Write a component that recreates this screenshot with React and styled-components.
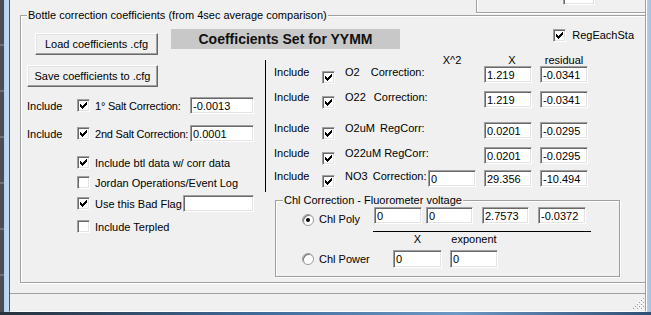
import React from 'react';
import styled, { createGlobalStyle, css } from 'styled-components';

/* Globals */
const Global = createGlobalStyle`
  html, body { margin: 0; padding: 0; }
  body {
    width: 651px;
    height: 315px;
    overflow: hidden;
    background: #2f3338;
    font-family: "Liberation Sans", Arial, sans-serif;
    font-size: 11px;
    color: #000;
  }
`

const sunken = css`
  border: 1px solid;
  border-color: #a0a0a0 #ffffff #ffffff #a0a0a0;
  box-shadow: inset 1px 1px 0 #696969, inset -1px -1px 0 #e3e3e3;
`

/* Window frame */
const Window = styled.div`
  width: 651px;
  height: 315px;
  display: flex;
  flex-direction: column;
`
const Frame = styled.div`
  display: flex;
  height: 312px;
`
const LeftEdge = styled.div`
  width: 9px;
  flex: none;
  background:
    repeating-linear-gradient(#4a4e54 0 44px, #6c7076 44px 46px) left / 4px 100% no-repeat,
    linear-gradient(to right, #a6c8ea, #c3dbf2);
`
const RightEdge = styled.div`
  width: 5px;
  flex: none;
  background: linear-gradient(to right, #ffffff 0 1px, #b4cfec 1px, #9fc0e4);
`
const BottomEdge = styled.div`
  height: 3px;
  background: linear-gradient(to right, #27313c, #3f6b9a 40%, #6d98c6 70%, #2f4f74);
`
const Client = styled.div`
  flex: 1;
  display: flex;
  flex-direction: column;
  background: #f0f0f0;
  border-left: 1px solid #46505a;
  border-right: 1px solid #a0a0a0;
  border-bottom: 1px solid #ffffff;
  overflow: hidden;
`

/* Top strip (the box above, cut off) */
const TopStrip = styled.div`
  height: 15px;
  flex: none;
  display: flex;
  padding-left: 466px;
`
const TopBox = styled.div`
  box-sizing: border-box;
  flex: 1;
  height: 13px;
  padding-left: 86px;
  border-left: 1px solid #a0a0a0;
  border-bottom: 1px solid #a0a0a0;
  box-shadow: inset 1px 0 0 #fff, 0 1px 0 #fff;
  display: flex;
  align-items: flex-start;
`

/* Group boxes */
const Group = styled.div`
  box-sizing: border-box;
  flex: none;
  height: 268px;
  margin-left: 10px;
  border: 1px solid #a0a0a0;
  border-right: none;
  box-shadow: inset 1px 1px 0 #fff, 0 1px 0 #fff;
  display: flex;
  flex-direction: column;
`
const ChlGroup = styled.div`
  box-sizing: border-box;
  width: 345px;
  height: 77px;
  margin: 8px 0 0 10px;
  border: 1px solid #a0a0a0;
  box-shadow: inset 1px 1px 0 #fff, 1px 1px 0 #fff;
  display: flex;
  flex-direction: column;
`
const Legend = styled.span`
  align-self: flex-start;
  margin: -7px 0 0 ${p => p.$ml}px;
  padding: 0 1px;
  background: #f0f0f0;
  line-height: 13px;
  white-space: nowrap;
`

/* Controls */
const Button = styled.button`
  box-sizing: border-box;
  width: ${p => p.$w}px;
  height: 22px;
  margin: ${p => p.$m};
  padding: 0;
  font: 11px "Liberation Sans", Arial, sans-serif;
  color: #000;
  background: #f0f0f0;
  border: 1px solid;
  border-color: #ffffff #696969 #696969 #ffffff;
  box-shadow: inset -1px -1px 0 #a0a0a0, inset 1px 1px 0 #e3e3e3;
`
const Field = styled.input.attrs({ readOnly: true, type: 'text' })`
  box-sizing: border-box;
  width: ${p => p.$w || 48}px;
  height: ${p => p.$h || 17}px;
  margin: ${p => p.$mt || 0}px 0 0 ${p => p.$ml || 0}px;
  padding: 0 0 0 2px;
  font: 11px "Liberation Sans", Arial, sans-serif;
  color: #000;
  background: #fff;
  outline: none;
  ${sunken}
`
const Box = styled.span`
  box-sizing: border-box;
  width: 13px;
  height: 13px;
  flex: none;
  display: inline-flex;
  align-items: center;
  justify-content: center;
  background: #fff;
  align-self: ${p => p.$self || 'auto'};
  margin-bottom: ${p => p.$mb || 0}px;
  ${sunken}
`
const RadioDot = styled.span`
  box-sizing: border-box;
  width: 12px;
  height: 12px;
  flex: none;
  margin-top: ${p => p.$mt || 0}px;
  border-radius: 50%;
  background: #fff;
  border: 1px solid #9a9a9a;
  box-shadow: inset 1px 1px 0 #7a7a7a;
  display: inline-flex;
  align-items: center;
  justify-content: center;
  &::after {
    content: "";
    width: 4px;
    height: 4px;
    border-radius: 50%;
    background: ${p => (p.$on ? '#000' : 'transparent')};
  }
`

const TICK = [[1, 3], [2, 4], [3, 5], [4, 4], [5, 3], [6, 2], [7, 1]]

function Check({ on = true, self, mb }) {
  return (
    <Box $self={self} $mb={mb}>
      {on && (
        <svg width="9" height="9" viewBox="0 0 9 9" shapeRendering="crispEdges">
          {TICK.map(([x, y]) => (
            <rect key={x} x={x} y={y} width="1" height="3" fill="#000" />
          ))}
        </svg>
      )}
    </Box>
  )
}

/* Top row */
const TopRow = styled.div`
  display: flex;
  align-items: flex-start;
  height: 26px;
  margin-top: 7px;
`
const TitleLabel = styled.div`
  width: 229px;
  height: 20px;
  margin-left: 13px;
  background: #c8c8c8;
  font-size: 14px;
  font-weight: bold;
  line-height: 20px;
  text-align: center;
  color: #111;
`
const RegEach = styled.div`
  margin: 0 11px 0 auto;
  display: flex;
  align-items: center;
  gap: 6px;
  height: 13px;
  line-height: 13px;
`

/* Body */
const Body = styled.div`
  display: flex;
  align-items: flex-start;
`
const LeftCol = styled.div`
  box-sizing: border-box;
  width: 244px;
  flex: none;
  padding-left: 6px;
  display: flex;
  flex-direction: column;
  align-items: flex-start;
`
const SaltRow = styled.div`
  display: grid;
  grid-template-columns: 50px 18px 95px 64px;
  align-items: center;
  height: 17px;
  margin-top: ${p => p.$mt}px;
  white-space: nowrap;
`
const SaltText = styled.span`
  letter-spacing: -0.2px;
`
const OptRow = styled.div`
  display: flex;
  align-items: center;
  height: 17px;
  padding-left: 50px;
  margin-top: ${p => p.$mt}px;
  white-space: nowrap;
`
const OptText = styled.span`
  margin-left: 5px;
  width: ${p => (p.$w ? `${p.$w}px` : 'auto')};
`

const RightCol = styled.div`
  flex: 1;
  display: flex;
  flex-direction: column;
`
const CoeffPanel = styled.div`
  padding: 0 0 5px 9px;
  background: linear-gradient(#000, #000) left 5px / 1px calc(100% - 5px) no-repeat;
`
const CoeffRow = styled.div`
  display: grid;
  grid-template-columns: 48px 23px 83px 56px 56px 48px;
  height: ${p => p.$h || 17}px;
  margin-top: ${p => p.$mt || 0}px;
  white-space: nowrap;
`
const Cell = styled.span`
  align-self: start;
  line-height: 13px;
`
const HeadCell = styled.span`
  grid-column: ${p => p.$col};
  width: 48px;
  box-sizing: border-box;
  padding-left: ${p => p.$pl || 0}px;
  text-align: center;
  line-height: 11px;
`
const Spaced = styled.span`
  word-spacing: ${p => p.$ws}px;
`

/* Chl group content */
const PolyRow = styled.div`
  display: flex;
  align-items: flex-start;
  height: 17px;
  padding-left: 26px;
`
const PowerRow = styled.div`
  display: flex;
  align-items: center;
  height: 18px;
  margin-top: 4px;
  padding-left: 26px;
`
const RadioText = styled.span`
  margin: ${p => p.$mt || 0}px 0 0 5px;
  width: ${p => p.$w}px;
  line-height: 13px;
  white-space: nowrap;
`
const Rule = styled.div`
  width: 218px;
  height: 1px;
  margin: 7px 0 0 97px;
  background: #000;
`
const ChlHead = styled.div`
  display: flex;
  gap: 8px;
  margin: 1px 0 0 117px;
  line-height: 13px;
`
const ChlHeadCell = styled.span`
  width: ${p => p.$w}px;
  text-align: center;
`

/* Status bar */
const StatusBar = styled.div`
  box-sizing: border-box;
  height: 18px;
  margin-top: 10px;
  border-top: 1px solid #a0a0a0;
  display: flex;
  justify-content: flex-end;
  align-items: flex-end;
  padding: 0 1px 1px 0;
`

function Grip() {
  return (
    <svg width="12" height="12" viewBox="0 0 12 12" shapeRendering="crispEdges">
      {[0, 4, 8].map(o =>
        Array.from({ length: 12 - o }).map((_, i) => (
          <rect key={`${o}-${i}`} x={11 - i} y={o + i} width="1" height="1" fill={i % 2 ? '#fff' : '#9c9c9c'} />
        ))
      )}
    </svg>
  )
}

const coeffRows = [
  { mt: 0, name: 'O2', ws: 8, kind: 'Correction:', x: '1.219', r: '-0.0341' },
  { mt: 8, name: 'O22', ws: 5, kind: 'Correction:', x: '1.219', r: '-0.0341' },
  { mt: 14, name: 'O2uM', ws: 2, kind: 'RegCorr:', x: '0.0201', r: '-0.0295' },
  { mt: 8, name: 'O22uM', ws: 0, kind: 'RegCorr:', x: '0.0201', r: '-0.0295' },
  { mt: 6, name: 'NO3', ws: 2, kind: 'Correction:', x2: '0', x: '29.356', r: '-10.494' },
]

export default function App() {
  return (
    <>
      <Global />
      <Window>
        <Frame>
          <LeftEdge />
          <Client>
            <TopStrip>
              <TopBox>
                <Field $w={32} $mt={-12} value="" />
              </TopBox>
            </TopStrip>

            <Group>
              <Legend $ml={6}>Bottle correction coefficients (from 4sec average comparison)</Legend>

              <TopRow>
                <Button $w={123} $m="4px 0 0 14px">Load coefficients .cfg</Button>
                <TitleLabel>Coefficients Set for YYMM</TitleLabel>
                <RegEach>
                  <Check />
                  <span>RegEachSta</span>
                </RegEach>
              </TopRow>

              <Body>
                <LeftCol>
                  <Button $w={131} $m="10px 0 0 0">Save coefficients to .cfg</Button>
                  <SaltRow $mt={10}>
                    <span>Include</span>
                    <Check />
                    <SaltText>1° Salt Correction:</SaltText>
                    <Field $w={64} value="-0.0013" />
                  </SaltRow>
                  <SaltRow $mt={11}>
                    <span>Include</span>
                    <Check />
                    <SaltText>2nd Salt Correction:</SaltText>
                    <Field $w={64} value="0.0001" />
                  </SaltRow>
                  <OptRow $mt={12}>
                    <Check />
                    <OptText>Include btl data w/ corr data</OptText>
                  </OptRow>
                  <OptRow $mt={3}>
                    <Check on={false} />
                    <OptText>Jordan Operations/Event Log</OptText>
                  </OptRow>
                  <OptRow $mt={4}>
                    <Check />
                    <OptText $w={88}>Use this Bad Flag</OptText>
                    <Field $w={71} value="" />
                  </OptRow>
                  <OptRow $mt={6}>
                    <Check on={false} />
                    <OptText>Include Terpled</OptText>
                  </OptRow>
                </LeftCol>

                <RightCol>
                  <CoeffPanel>
                    <CoeffRow $h={11}>
                      <HeadCell $col={4}>X^2</HeadCell>
                      <HeadCell $col={5} $pl={8}>X</HeadCell>
                      <HeadCell $col={6}>residual</HeadCell>
                    </CoeffRow>
                    {coeffRows.map(row => (
                      <CoeffRow key={row.name} $mt={row.mt}>
                        <Cell>Include</Cell>
                        <Check self="end" mb={-1} />
                        <Cell>
                          <Spaced $ws={row.ws}>{row.name} {row.kind}</Spaced>
                        </Cell>
                        {row.x2 !== undefined ? <Field value={row.x2} /> : <span />}
                        <Field value={row.x} />
                        <Field value={row.r} />
                      </CoeffRow>
                    ))}
                  </CoeffPanel>

                  <ChlGroup>
                    <Legend $ml={7}>Chl Correction - Fluorometer voltage</Legend>
                    <PolyRow>
                      <RadioDot $on $mt={7} />
                      <RadioText $mt={6} $w={55}>Chl Poly</RadioText>
                      <Field value="0" />
                      <Field $w={47} $ml={4} value="0" />
                      <Field $w={47} $ml={9} value="2.7573" />
                      <Field $ml={9} value="-0.0372" />
                    </PolyRow>
                    <Rule />
                    <ChlHead>
                      <ChlHeadCell $w={49}>X</ChlHeadCell>
                      <ChlHeadCell $w={48}>exponent</ChlHeadCell>
                    </ChlHead>
                    <PowerRow>
                      <RadioDot />
                      <RadioText $w={74}>Chl Power</RadioText>
                      <Field $w={49} $h={18} value="0" />
                      <Field $h={18} $ml={8} value="0" />
                    </PowerRow>
                  </ChlGroup>
                </RightCol>
              </Body>
            </Group>

            <StatusBar>
              <Grip />
            </StatusBar>
          </Client>
          <RightEdge />
        </Frame>
        <BottomEdge />
      </Window>
    </>
  )
}
